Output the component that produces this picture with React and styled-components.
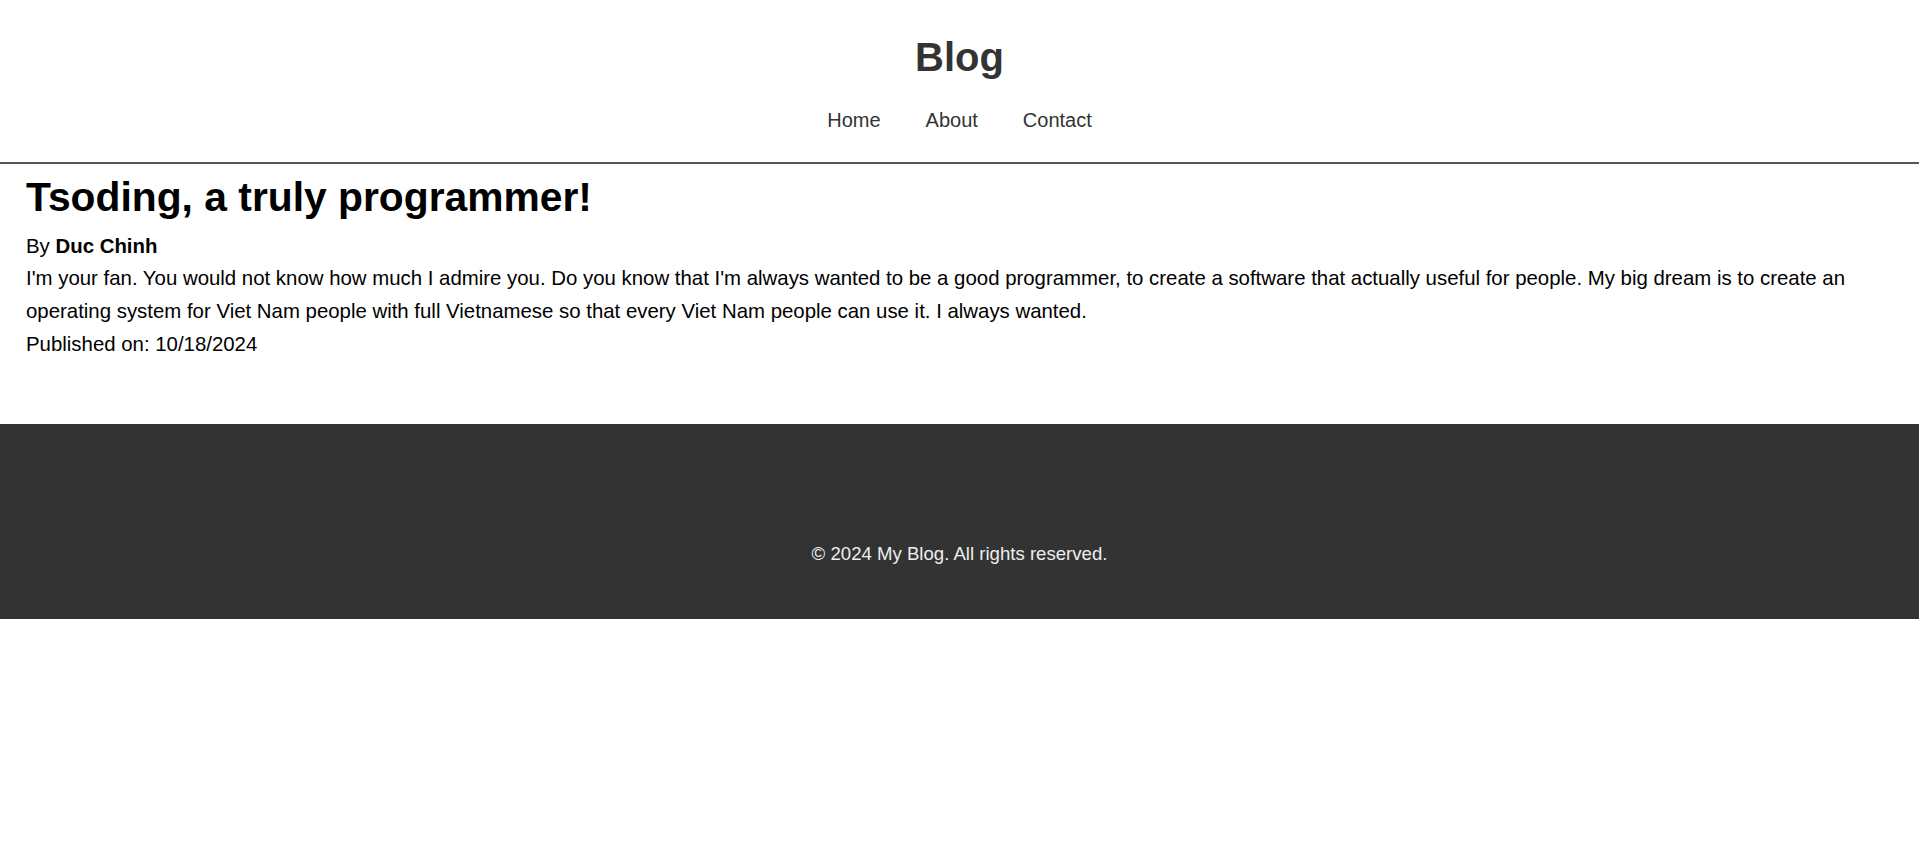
import React from "react";
import styled, { createGlobalStyle } from "styled-components";

const GlobalStyle = createGlobalStyle`
  html, body {
    margin: 0;
    padding: 0;
    background: #ffffff;
  }
  body {
    font-family: "Liberation Sans", Arial, Helvetica, sans-serif;
    line-height: 1.6;
    color: #000;
  }
  * { box-sizing: border-box; }
`;

const Header = styled.header`
  text-align: center;
  padding: 33px 0 26px;
  margin-right: 1px;
  border-bottom: 2px solid #555;
`;

const SiteTitle = styled.h1`
  margin: 0;
  font-size: 40px;
  line-height: 48px;
  font-weight: 700;
  color: #333;
`;

const Nav = styled.nav`
  margin-top: 23px;
`;

const NavList = styled.ul`
  list-style: none;
  margin: 0;
  padding: 0;
  display: flex;
  justify-content: center;
  gap: 45px;
`;

const NavLink = styled.a`
  font-size: 20px;
  line-height: 32px;
  color: #333;
  text-decoration: none;
`;

const Main = styled.main`
  padding: 9px 26px 0;
  min-height: 260px;
`;

const Article = styled.article``;

const PostTitle = styled.h2`
  margin: 0 0 9px;
  font-size: 40.8px;
  line-height: 48px;
  font-weight: 700;
  color: #000;
`;

const Line = styled.p`
  margin: 0;
  font-size: 20.4px;
  line-height: 33px;
  color: #000;
`;

const Byline = styled(Line)`
  padding-top: 1px;
  line-height: 31px;
`;

const Footer = styled.footer`
  background: #333;
  color: #eee;
  text-align: center;
  padding: 115px 0 51px;
  margin-right: 1px;
`;

const FooterText = styled.p`
  margin: 0;
  font-size: 18.6px;
  line-height: 29px;
`;

export default function App() {
  return (
    <>
      <GlobalStyle />
      <Header>
        <SiteTitle>Blog</SiteTitle>
        <Nav>
          <NavList>
            <li><NavLink href="#">Home</NavLink></li>
            <li><NavLink href="#">About</NavLink></li>
            <li><NavLink href="#">Contact</NavLink></li>
          </NavList>
        </Nav>
      </Header>
      <Main>
        <Article>
          <PostTitle>Tsoding, a truly programmer!</PostTitle>
          <Byline>By <strong>Duc Chinh</strong></Byline>
          <Line>
            I'm your fan. You would not know how much I admire you. Do you know that I'm always wanted to be a good programmer, to create a software that actually useful for people. My big dream is to create an operating system for Viet Nam people with full Vietnamese so that every Viet Nam people can use it. I always wanted.
          </Line>
          <Line>Published on: 10/18/2024</Line>
        </Article>
      </Main>
      <Footer>
        <FooterText>© 2024 My Blog. All rights reserved.</FooterText>
      </Footer>
    </>
  );
}
